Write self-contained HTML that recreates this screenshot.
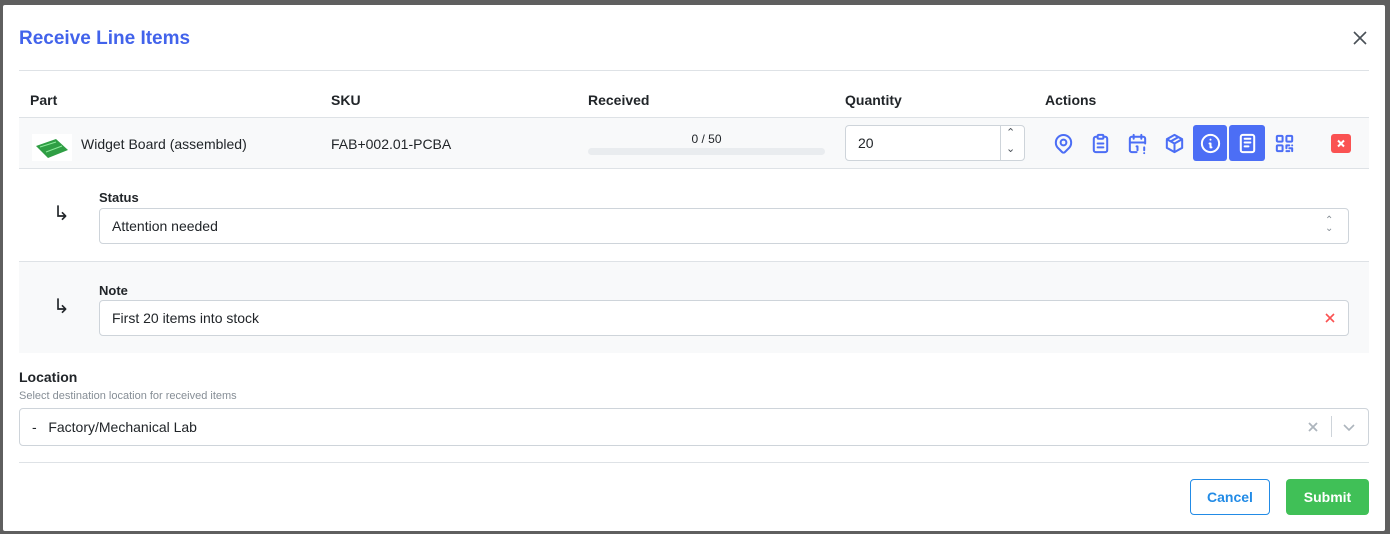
<!DOCTYPE html>
<html><head><style>
*{box-sizing:border-box;margin:0;padding:0}
body{width:1390px;height:534px;background:#5f5f5f;font-family:"Liberation Sans",sans-serif;font-size:14px;color:#212529;position:relative;overflow:hidden}
.m{position:absolute;left:3px;top:5px;width:1382px;height:526px;background:#fff;border-radius:2px}
.a{position:absolute}
.hl{position:absolute;left:16px;width:1350px;height:1px;background:#dee2e6}
.th{position:absolute;top:87px;font-weight:bold;font-size:14px}
.ic{position:absolute;top:120px;width:34px;height:36px;display:flex;align-items:center;justify-content:center}
.ic svg{width:23px;height:23px;fill:none;stroke:#4c6ef5;stroke-width:2.1;stroke-linecap:round;stroke-linejoin:round}
.ic.f{background:#4c6ef5;border-radius:3px}
.ic.f svg{stroke:#fff}
.inp{position:absolute;border:1px solid #ced4da;border-radius:4px;background:#fff;font-size:14px;padding-left:12px;display:flex;align-items:center}
.lbl{position:absolute;font-weight:bold;font-size:13px}
</style></head><body>
<div class="m">
<div class="a" style="left:16px;top:23px;font-size:19px;font-weight:bold;color:#4263eb">Receive Line Items</div>
<svg class="a" style="left:1350px;top:26px" width="14" height="14" viewBox="0 0 14 14"><path d="M1 1L13 13M13 1L1 13" stroke="#495057" stroke-width="1.6"/></svg>
<div class="hl" style="top:65px"></div>
<div class="th" style="left:27px">Part</div>
<div class="th" style="left:328px">SKU</div>
<div class="th" style="left:585px">Received</div>
<div class="th" style="left:842px">Quantity</div>
<div class="th" style="left:1042px">Actions</div>
<div class="a" style="left:16px;top:112px;width:1350px;height:52px;background:#f8f9fa;border-top:1px solid #dee2e6;border-bottom:1px solid #dee2e6"></div>
<div class="a" style="left:29px;top:129px;width:40px;height:27px;background:#fff"><svg width="40" height="27"><path d="M4 12L24 5L36 16L16 24Z" fill="#2f9e44"/><path d="M8 13L24 8M14 18L30 12" stroke="#8ce99a" stroke-width="1"/></svg></div>
<div class="a" style="left:78px;top:131px">Widget Board (assembled)</div>
<div class="a" style="left:328px;top:131px">FAB+002.01-PCBA</div>
<div class="a" style="left:585px;top:127px;width:237px;text-align:center;font-size:12px">0 / 50</div>
<div class="a" style="left:585px;top:143px;width:237px;height:7px;border-radius:4px;background:#e9ecef"></div>
<div class="inp" style="left:842px;top:120px;width:180px;height:36px">20</div>
<div class="a" style="left:997px;top:120px;width:1px;height:36px;background:#ced4da"></div>
<div class="a" style="left:1003px;top:121px;font-size:11px;color:#495057">&#8963;</div>
<div class="a" style="left:1003px;top:137px;font-size:11px;color:#495057">&#8964;</div>
<div class="ic" style="left:1043px"><svg viewBox="0 0 24 24"><circle cx="12" cy="11" r="3"/><path d="M17.7 16.7L13.4 21a2 2 0 0 1-2.8 0l-4.3-4.3a8 8 0 1 1 11.4 0z"/></svg></div>
<div class="ic" style="left:1080px"><svg viewBox="0 0 24 24"><path d="M9 5H7a2 2 0 0 0-2 2v12a2 2 0 0 0 2 2h10a2 2 0 0 0 2-2V7a2 2 0 0 0-2-2h-2"/><rect x="9" y="3" width="6" height="4" rx="1"/><path d="M9 12h6M9 16h6"/></svg></div>
<div class="ic" style="left:1117px"><svg viewBox="0 0 24 24"><path d="M11 21H6a2 2 0 0 1-2-2V7a2 2 0 0 1 2-2h12a2 2 0 0 1 2 2v5M16 3v4M8 3v4M4 11h16M19 16v3M19 22v.01M11 15h1v4"/></svg></div>
<div class="ic" style="left:1154px"><svg viewBox="0 0 24 24"><path d="M12 3l8 4.5v9L12 21l-8-4.5v-9z M12 12l8-4.5M12 12v9M12 12L4 7.5M16 5.3l-8 4.5"/></svg></div>
<div class="ic f" style="left:1190px"><svg viewBox="0 0 24 24"><circle cx="12" cy="12" r="9"/><path d="M12 8h.01M11 12h1v4h1"/></svg></div>
<div class="ic f" style="left:1226px;width:36px"><svg viewBox="0 0 24 24"><rect x="5" y="3" width="14" height="18" rx="2"/><path d="M9 7h6M9 11h6M9 15h4"/></svg></div>
<div class="ic" style="left:1264px"><svg viewBox="0 0 24 24"><rect x="4" y="4" width="6" height="6" rx="1"/><rect x="14" y="4" width="6" height="6" rx="1"/><rect x="4" y="14" width="6" height="6" rx="1"/><path d="M14 14h3M20 14v0M14 14v3M14 20h3M17 17h3v3"/></svg></div>
<div class="a" style="left:1328px;top:129px;width:20px;height:19px;background:#fa5252;border-radius:3px"><svg width="20" height="19"><path d="M7 6.5L13 12.5M13 6.5L7 12.5" stroke="#fff" stroke-width="2"/></svg></div>
<div class="a" style="left:50px;top:196px;font-size:20px">&#8627;</div>
<div class="lbl" style="left:96px;top:185px">Status</div>
<div class="inp" style="left:96px;top:203px;width:1250px;height:36px">Attention needed</div>
<div class="a" style="left:1322px;top:212px;font-size:10px;color:#868e96;line-height:8px">&#8963;<br>&#8964;</div>
<div class="a" style="left:16px;top:256px;width:1350px;height:92px;background:#f8f9fa;border-top:1px solid #dee2e6"></div>
<div class="a" style="left:50px;top:289px;font-size:20px">&#8627;</div>
<div class="lbl" style="left:96px;top:278px">Note</div>
<div class="inp" style="left:96px;top:295px;width:1250px;height:36px">First 20 items into stock</div>
<svg class="a" style="left:1322px;top:308px" width="10" height="10"><path d="M1 1L9 9M9 1L1 9" stroke="#fa5252" stroke-width="1.6"/></svg>
<div class="lbl" style="left:16px;top:364px;font-size:14px">Location</div>
<div class="a" style="left:16px;top:385px;font-size:11px;color:#868e96">Select destination location for received items</div>
<div class="inp" style="left:16px;top:403px;width:1350px;height:38px;padding-left:12px">-&nbsp;&nbsp;&nbsp;Factory/Mechanical Lab</div>
<svg class="a" style="left:1305px;top:417px" width="10" height="10"><path d="M1 1L9 9M9 1L1 9" stroke="#adb5bd" stroke-width="1.8"/></svg>
<div class="a" style="left:1328px;top:411px;width:1px;height:21px;background:#ced4da"></div>
<svg class="a" style="left:1340px;top:419px" width="12" height="8"><path d="M1 1L6 6L11 1" stroke="#adb5bd" stroke-width="1.6" fill="none"/></svg>
<div class="hl" style="top:457px"></div>
<div class="a" style="left:1187px;top:474px;width:80px;height:36px;border:1px solid #228be6;border-radius:4px;color:#228be6;font-weight:bold;display:flex;align-items:center;justify-content:center">Cancel</div>
<div class="a" style="left:1283px;top:474px;width:83px;height:36px;background:#40c057;border-radius:4px;color:#fff;font-weight:bold;display:flex;align-items:center;justify-content:center">Submit</div>
</div>
</body></html>
